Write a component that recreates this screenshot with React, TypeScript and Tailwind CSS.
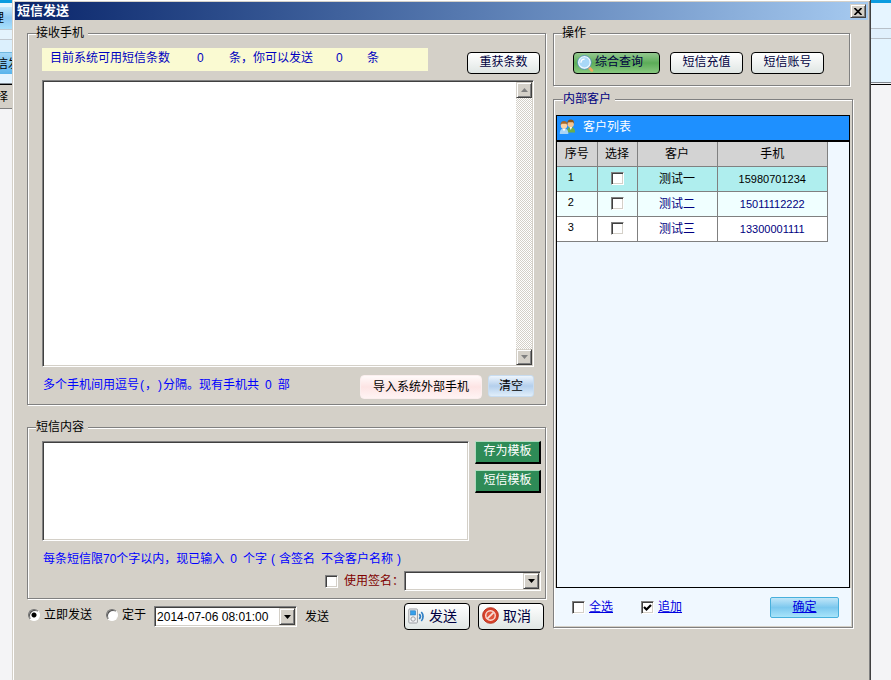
import React, { useState } from 'react';
import { clsx } from 'clsx';

interface Customer {
  id: number;
  name: string;
  phone: string;
}

const CUSTOMERS: Customer[] = [
  { id: 1, name: '测试一', phone: '15980701234' },
  { id: 2, name: '测试二', phone: '15011112222' },
  { id: 3, name: '测试三', phone: '13300001111' },
];

const ROW_STYLES = [
  'bg-[#afeeee] text-black',
  'bg-[#f0ffff] text-[#000080]',
  'bg-white text-[#000080]',
];

const sunken =
  'border border-t-[#808080] border-l-[#808080] border-b-white border-r-white shadow-[inset_1px_1px_0_#404040,inset_-1px_-1px_0_#d4d0c8]';
const raised =
  'border border-t-[#d4d0c8] border-l-[#d4d0c8] border-b-[#404040] border-r-[#404040] bg-[#d4d0c8] shadow-[inset_1px_1px_0_#fff,inset_-1px_-1px_0_#808080]';
const softButton =
  'flex items-center rounded-[4px] border border-black bg-linear-to-b from-white to-[#e0e6e4] text-[#000040]';

const GroupBox: React.FC<{
  title: string;
  legendClass?: string;
  className?: string;
  children: React.ReactNode;
}> = ({ title, legendClass = 'ml-2', className, children }) => (
  <fieldset
    className={clsx(
      'min-w-0 border border-[#808080] shadow-[1px_1px_0_#fff,inset_1px_1px_0_#fff]',
      className
    )}
  >
    <legend className={clsx('bg-[#d4d0c8] pr-1 leading-4', legendClass)}>{title}</legend>
    {children}
  </fieldset>
);

const Arrow: React.FC<{ up?: boolean; color?: string }> = ({ up, color = '#000' }) => (
  <svg width="7" height="4" viewBox="0 0 7 4" fill={color} aria-hidden="true">
    <path d={up ? 'M3.5 0 7 4H0z' : 'M0 0h7L3.5 4z'} />
  </svg>
);

const CheckBox: React.FC<{
  id?: string;
  checked: boolean;
  label?: string;
  onChange: () => void;
}> = ({ id, checked, label, onChange }) => (
  <span className="inline-grid place-items-center align-middle">
    <input
      id={id}
      type="checkbox"
      checked={checked}
      aria-label={label}
      onChange={onChange}
      className={clsx('col-start-1 row-start-1 size-[13px] appearance-none bg-white', sunken)}
    />
    {checked && (
      <svg
        className="pointer-events-none z-10 col-start-1 row-start-1"
        width="9"
        height="9"
        viewBox="0 0 9 9"
        fill="none"
        stroke="#000"
        strokeWidth="2.2"
        aria-hidden="true"
      >
        <path d="M1 4 3.5 6.5 8 2" />
      </svg>
    )}
  </span>
);

const Radio: React.FC<{
  label: string;
  checked: boolean;
  onChange: () => void;
}> = ({ label, checked, onChange }) => (
  <label className="flex items-center gap-1 pb-1">
    <input
      type="radio"
      name="send-mode"
      checked={checked}
      onChange={onChange}
      className="size-3 appearance-none rounded-full border border-t-[#707070] border-l-[#707070] border-b-white border-r-white bg-white shadow-[inset_1px_1px_0_#505050] checked:bg-[radial-gradient(circle,#000_2px,#fff_3px)]"
    />
    {label}
  </label>
);

const SearchIcon = () => (
  <svg width="17" height="17" viewBox="0 0 16 16" fill="none" aria-hidden="true">
    <path d="m11.5 12 2.500 2.500" stroke="#f0a860" strokeWidth="2.600" strokeLinecap="round" />
    <circle cx="7" cy="7" r="5.600" fill="#a9d8f8" stroke="#eef7fd" strokeWidth="1.600" />
    <circle cx="7" cy="7" r="6.500" stroke="#4a8cc8" strokeWidth=".7" />
    <path d="M3.700 7.200c0-2 1.400-3.400 3.500-3.400" stroke="#fff" strokeWidth="1.200" />
  </svg>
);

const UsersIcon = () => (
  <svg width="17" height="16" viewBox="0 0 17 16" aria-hidden="true">
    <path d="M8 13.500c0-4 1.200-5.500 3.800-5.500s4.200 1.500 4.200 5.500z" fill="#6fae48" />
    <path d="m10.500 8 1.300 3 1.300-3z" fill="#fff" />
    <circle cx="11.700" cy="5" r="3.200" fill="#f6c490" />
    <path d="M8.300 5c-.3-3.200 1.400-4.600 3.500-4.600s3.600 1.400 3.300 4.600l-1-1.700H9.500z" fill="#8c5318" />
    <path d="M.8 15c0-4 1.400-5.500 4.200-5.500S9.300 11 9.300 15z" fill="#a8d4f6" />
    <path d="m3.500 9.500 1.500 3 1.500-3z" fill="#fff" />
    <circle cx="5" cy="6.500" r="3.200" fill="#fbd3a6" />
    <path d="M1.600 6.500c-.3-3.200 1.300-4.500 3.400-4.500s3.700 1.300 3.400 4.500L7.300 4.800H2.700z" fill="#a8682a" />
  </svg>
);

const DeviceIcon = () => (
  <svg width="17" height="16" viewBox="0 0 17 16" fill="none" aria-hidden="true">
    <rect x=".8" y="1" width="8.600" height="14" rx=".8" fill="#f3f4f6" stroke="#9a9da2" />
    <rect x="2.600" y="2.800" width="5" height="4.200" fill="#35a0ec" stroke="#2678b8" strokeWidth=".6" />
    <circle cx="5.100" cy="11" r="2.200" stroke="#9a9da1" />
    <path d="M11.300 6c1.300 1.400 1.300 3.600 0 5M13.300 4c2.300 2.500 2.300 6.500 0 9" stroke="#2f7fc4" strokeWidth="1.700" />
  </svg>
);

const ForbidIcon = () => (
  <svg width="17" height="17" viewBox="0 0 16 16" fill="none" aria-hidden="true">
    <circle cx="8" cy="8" r="7.400" fill="#d8432c" stroke="#b02a18" strokeWidth=".8" />
    <circle cx="8" cy="8" r="4.500" fill="#e0553c" stroke="#f8e0da" strokeWidth="1.300" />
    <path d="m5 11 6-6" stroke="#f8e0da" strokeWidth="1.600" />
  </svg>
);

const App: React.FC = () => {
  const [mode, setMode] = useState<'now' | 'timed'>('now');
  const [selected, setSelected] = useState<number[]>([]);
  const [append, setAppend] = useState(true);
  const [useSign, setUseSign] = useState(false);

  const toggle = (id: number) =>
    setSelected((prev) => (prev.includes(id) ? prev.filter((x) => x !== id) : [...prev, id]));
  const allSelected = selected.length === CUSTOMERS.length;

  return (
    <div className="flex min-h-screen bg-[#f4f4f6] font-['Liberation_Sans','Noto_Sans_CJK_SC',sans-serif] text-xs leading-4 text-black">
      {/* slice of the parent window on the left */}
      <div className="flex w-3 shrink-0 flex-col whitespace-nowrap">
        <div className="h-[3px] bg-[#0c9ce0]" />
        <div className="h-1 bg-[#e8f6ff]" />
        <div className="flex h-[22px] items-center overflow-hidden bg-linear-to-b from-[#c4e8fc] via-[#8cc8f4] to-[#a8e0fc]">
          <span className="-ml-2">理</span>
        </div>
        <div className="h-[11px] border-y border-[#c0c8d0] bg-[#e4f3fd]" />
        <div className="h-3 bg-[#dcf0fd]" />
        <div className="flex h-[22px] items-center overflow-hidden border-t border-[#70b8e0] bg-linear-to-b from-[#a4d8f8] to-[#58b4ec]">
          <span className="-ml-1">信发</span>
        </div>
        <div className="h-2.5 border-b border-[#808890] bg-[#e4f4ff]" />
        <div className="flex h-[25px] items-center overflow-hidden border-t border-b border-t-black border-b-[#808080] bg-[#d4d0c8]">
          <span className="-ml-1">择</span>
        </div>
      </div>

      <main className="min-w-0 flex-1 border-r border-l border-r-[#404040] border-l-[#d4d0c8] bg-[#d4d0c8] pt-0.5 shadow-[inset_1px_1px_0_#fff,inset_-1px_0_0_#808080]">
        <header className="mx-0.5 flex h-[18px] items-center justify-between bg-linear-to-r from-[#0a246a] to-[#a6caf0] pr-0.5 pl-0.5">
          <h1 className="text-[13px] font-bold text-white">短信发送</h1>
          <button type="button" aria-label="关闭" className={clsx('flex h-3.5 w-4 items-center justify-center', raised)}>
            <svg width="8" height="7" viewBox="0 0 8 7" stroke="#000" strokeWidth="1.700" aria-hidden="true">
              <path d="m.5 0 7 7M7.500 0l-7 7" />
            </svg>
          </button>
        </header>

        <div className="flex gap-[7px] pt-[5px] pr-[17px] pl-3.5">
          <section className="min-w-0 flex-1">
            <GroupBox title="接收手机" legendClass="-ml-1.5" className="pr-[5px] pb-[5px] pl-3.5">
              <div className="flex items-start justify-between pt-[7px]">
                <p className="flex h-[23px] w-[386px] items-center bg-[#fafad2] pb-1 pl-2 text-[#0000c0]">
                  <span className="w-[147px]">目前系统可用短信条数</span>
                  <span className="w-8">0</span>
                  <span className="w-[107px]">条，你可以发送</span>
                  <span className="w-[31px]">0</span>
                  <span>条</span>
                </p>
                <button type="button" className={clsx('mt-1 h-[22px] w-[73px] justify-center pb-0.5', softButton)}>
                  重获条数
                </button>
              </div>

              <div className={clsx('mt-1.5 mr-1.5 flex h-[287px] bg-white p-px', sunken)}>
                <textarea aria-label="接收手机" className="min-w-0 flex-1 resize-none px-1 outline-none" />
                <div className="flex w-4 flex-col justify-between bg-[repeating-conic-gradient(#fff_0_25%,#d4d0c8_0_50%)] bg-[length:2px_2px]">
                  <button type="button" aria-label="向上滚动" className={clsx('flex h-4 items-center justify-center', raised)}>
                    <Arrow up color="#808080" />
                  </button>
                  <button type="button" aria-label="向下滚动" className={clsx('flex h-4 items-center justify-center', raised)}>
                    <Arrow color="#808080" />
                  </button>
                </div>
              </div>

              <div className="mt-2 mr-1.5 flex items-start gap-1.5">
                <p className="flex flex-1 pt-0.5 pl-px whitespace-nowrap text-[#0000ff]">
                  <span>多个手机间用逗号</span>
                  <span className="px-px">(</span>
                  <span>，</span>
                  <span className="px-px">)</span>
                  <span>分隔。现有手机共</span>
                  <span className="px-1.5">0</span>
                  <span>部</span>
                </p>
                <button
                  type="button"
                  className="h-6 w-[122px] rounded-[4px] border border-[#fbeeee] bg-linear-to-b from-[#fffafa] via-[#fde4e4] to-[#fff4f4]"
                >
                  导入系统外部手机
                </button>
                <button
                  type="button"
                  className="h-[22px] w-[46px] rounded-[3px] border border-[#c8dcf0] bg-linear-to-b from-[#eef5fc] via-[#b4cfec] to-[#e0eefa]"
                >
                  清空
                </button>
              </div>
            </GroupBox>

            <GroupBox title="短信内容" legendClass="-ml-1.5" className="mt-3.5 pr-1 pb-[7px] pl-3.5">
              <div className="flex gap-1.5 pt-1.5">
                <textarea aria-label="短信内容" className={clsx('h-[100px] min-w-0 flex-1 resize-none bg-white px-1 outline-none', sunken)} />
                <div className="flex flex-col gap-1.5">
                  {['存为模板', '短信模板'].map((text) => (
                    <button
                      key={text}
                      type="button"
                      className="h-[23px] w-[66px] border-t border-r-2 border-b-2 border-l border-t-[#b0dcc0] border-r-black border-b-black border-l-[#b0dcc0] bg-[#2e8b57] pb-0.5 text-white"
                    >
                      {text}
                    </button>
                  ))}
                </div>
              </div>
              <p className="pt-2.5 pl-px whitespace-nowrap text-[#0000ff]">
                每条短信限70个字以内，现已输入<span className="px-1.5">0</span>个字
                <span className="px-1">(</span>含签名<span className="pl-1.5">不含客户名称</span>
                <span className="pl-1">)</span>
              </p>
              <div className="mt-1 flex items-center justify-end">
                <CheckBox id="use-sign" checked={useSign} onChange={() => setUseSign(!useSign)} />
                <label htmlFor="use-sign" className="w-[66px] pl-1.5 whitespace-nowrap text-[#800000]">
                  使用签名：
                </label>
                <div className={clsx('flex h-[20px] w-[137px] bg-white p-px', sunken)}>
                  <select aria-label="签名" className="min-w-0 flex-1 appearance-none outline-none">
                    <option />
                  </select>
                  <span className={clsx('flex w-4 items-center justify-center', raised)}>
                    <Arrow />
                  </span>
                </div>
              </div>
            </GroupBox>

            <div className="flex items-center pt-1 pr-0.5 pl-px">
              <Radio label="立即发送" checked={mode === 'now'} onChange={() => setMode('now')} />
              <span className="w-3.5" />
              <Radio label="定于" checked={mode === 'timed'} onChange={() => setMode('timed')} />
              <div className={clsx('mr-2 ml-2 flex h-[21px] w-[143px] bg-white p-px', sunken)}>
                <input
                  type="text"
                  aria-label="发送时间"
                  defaultValue="2014-07-06 08:01:00"
                  className="min-w-0 flex-1 pl-px outline-none"
                />
                <button type="button" aria-label="选择时间" className={clsx('flex w-4 items-center justify-center', raised)}>
                  <Arrow />
                </button>
              </div>
              <span className="flex-1">发送</span>
              <button type="button" className={clsx('mr-2 h-[27px] w-[66px] gap-1 pb-0.5 pl-[3px] text-sm', softButton)}>
                <DeviceIcon />
                发送
              </button>
              <button type="button" className={clsx('h-[27px] w-[66px] gap-1 pb-0.5 pl-[3px] text-sm', softButton)}>
                <ForbidIcon />
                取消
              </button>
            </div>
          </section>

          <section className="flex w-[300px] shrink-0 flex-col pb-0.5">
            <GroupBox title="操作" className="mr-[3px] h-[61px]">
              <div className="flex pt-[11px] pl-[19px]">
                <button
                  type="button"
                  className="mr-2.5 flex h-[22px] w-[87px] items-center gap-px rounded-[4px] border border-black bg-linear-to-b from-[#94c890] via-[#5cac58] to-[#88c880] pl-[3px] text-[#000040]"
                >
                  <SearchIcon />
                  <span className="pb-0.5">综合查询</span>
                </button>
                <button type="button" className={clsx('mr-2 h-[22px] w-[73px] justify-center pb-0.5', softButton)}>
                  短信充值
                </button>
                <button type="button" className={clsx('h-[22px] w-[73px] justify-center pb-0.5', softButton)}>
                  短信账号
                </button>
              </div>
            </GroupBox>

            <GroupBox title="内部客户" legendClass="ml-2 text-[#000080]" className="mt-[5px] flex flex-1 flex-col px-px pb-px">
              <div className="mx-px mt-2 flex-1 border border-black bg-[#f0f8ff]">
                <h2 className="flex h-[26px] items-center gap-[7px] border-b-2 border-black bg-[#1e90ff] pb-0.5 pl-0.5 text-white">
                  <UsersIcon />
                  客户列表
                </h2>
                <table className="w-[271px] table-fixed border-collapse text-center">
                  <thead>
                    <tr className="h-6 bg-[#d3d3d3]">
                      <th className="w-10 border-r border-b border-[#808080] font-normal">序号</th>
                      <th className="w-10 border-r border-b border-[#808080] font-normal">选择</th>
                      <th className="w-20 border-r border-b border-[#808080] font-normal">客户</th>
                      <th className="border-r border-b border-[#808080] font-normal">手机</th>
                    </tr>
                  </thead>
                  <tbody>
                    {CUSTOMERS.map((c, i) => (
                      <tr key={c.id} className={clsx('h-[25px]', ROW_STYLES[i % 3])}>
                        <td className="border-r border-b border-[#808080] pr-3 pb-1 text-[11px] text-black">{c.id}</td>
                        <td className="border-r border-b border-[#808080] leading-none">
                          <CheckBox label={c.name} checked={selected.includes(c.id)} onChange={() => toggle(c.id)} />
                        </td>
                        <td className="border-r border-b border-[#808080]">{c.name}</td>
                        <td className="border-r border-b border-[#808080] text-[11px]">{c.phone}</td>
                      </tr>
                    ))}
                  </tbody>
                </table>
              </div>

              <div className="flex h-[38px] items-center bg-[#f0f8ff] pr-3 pl-[17px] text-[#0000e0]">
                <CheckBox
                  label="全选"
                  checked={allSelected}
                  onChange={() => setSelected(allSelected ? [] : CUSTOMERS.map((c) => c.id))}
                />
                <a href="#all" className="ml-1 underline">全选</a>
                <span className="w-7" />
                <CheckBox label="追加" checked={append} onChange={() => setAppend(!append)} />
                <a href="#append" className="ml-1 flex-1 underline">追加</a>
                <button
                  type="button"
                  className="h-[21px] w-[69px] rounded-[2px] border border-[#48b0dc] bg-linear-to-b from-[#c0e6f8] via-[#7cc8ee] to-[#a8e4fa] underline"
                >
                  确定
                </button>
              </div>
            </GroupBox>
          </section>
        </div>
      </main>

      {/* slice of the parent window on the right */}
      <div className="flex w-5 shrink-0 flex-col">
        <div className="h-[3px] bg-[#0c9ce0]" />
        <div className="h-[25px] bg-[#e6f5ff]" />
        <div className="h-[11px] border-y border-[#b8c0c8] bg-[#e0f0fc]" />
        <div className="h-11 border-b border-[#808890] bg-[#e3f4ff]" />
        <div className="h-0.5 border-b border-black" />
      </div>
    </div>
  );
};

export default App;
